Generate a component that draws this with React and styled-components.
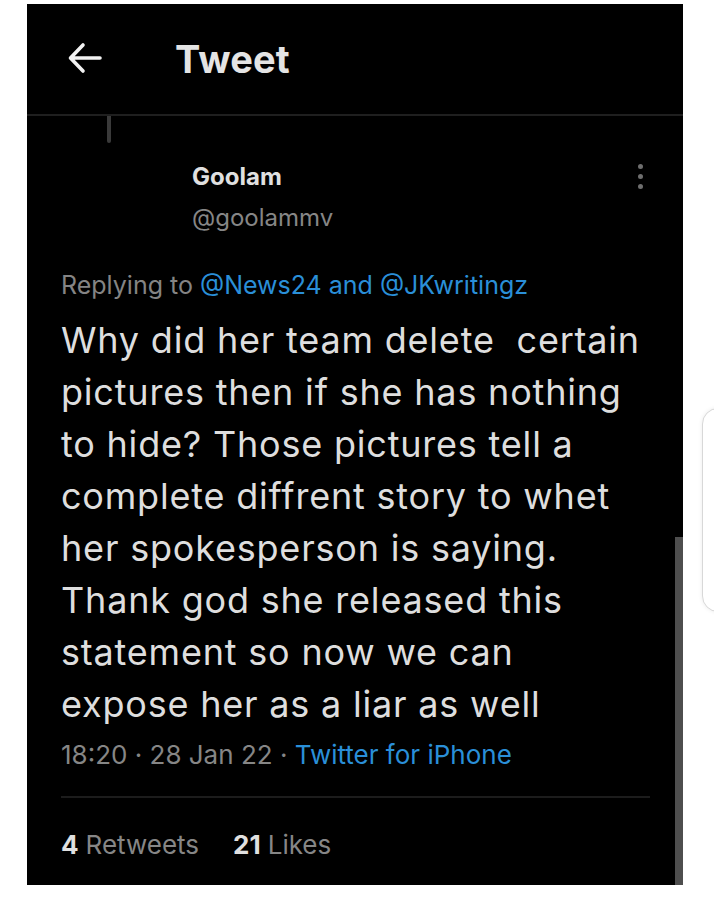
import styled, { createGlobalStyle } from "styled-components";

const Global = createGlobalStyle`
  html, body {
    margin: 0;
    padding: 0;
    background: #ffffff;
  }
  body {
    font-family: Inter, "Noto Sans", sans-serif;
    -webkit-font-smoothing: antialiased;
  }
`;

const Page = styled.div`
  position: relative;
  width: 714px;
  height: 905px;
  overflow: hidden;
  padding: 4px 0 0 27px;
  box-sizing: border-box;
`;

const Screen = styled.div`
  position: relative;
  width: 656px;
  height: 881px;
  background: #000;
  color: #e2e2e2;
  display: flex;
  flex-direction: column;
`;

const Header = styled.div`
  height: 112px;
  display: flex;
  align-items: center;
  border-bottom: 2px solid #1f1f1f;
  padding-left: 40px;
  box-sizing: border-box;
`;

const BackButton = styled.div`
  width: 36px;
  height: 36px;
  display: flex;
  align-items: center;
  justify-content: center;
  margin-right: 72px;
  margin-top: -2px;
`;

const HeaderTitle = styled.h1`
  margin: 0;
  font-size: 38px;
  font-weight: 700;
  letter-spacing: 0.2px;
  color: #e4e4e4;
`;

const Thread = styled.div`
  width: 4px;
  height: 27px;
  margin-left: 80px;
  background: #3a3a3a;
  border-radius: 0 0 2px 2px;
`;

const Author = styled.div`
  display: flex;
  justify-content: space-between;
  padding: 19px 40px 0 165px;
`;

const Names = styled.div`
  display: flex;
  flex-direction: column;
`;

const Name = styled.span`
  font-size: 24px;
  font-weight: 700;
  line-height: 30px;
  color: #e0e0e0;
`;

const Handle = styled.span`
  font-size: 24px;
  line-height: 30px;
  margin-top: 11px;
  color: #868686;
`;

const More = styled.div`
  display: flex;
  flex-direction: column;
  gap: 5px;
  padding-top: 2px;
`;

const Dot = styled.span`
  width: 5px;
  height: 5px;
  border-radius: 50%;
  background: #6e6e6e;
`;

const Content = styled.div`
  padding: 0 34px;
`;

const Replying = styled.div`
  margin-top: 37px;
  font-size: 25px;
  line-height: 30px;
  color: #848484;
`;

const Mention = styled.span`
  color: #2a8fd8;
`;

const Body = styled.p`
  margin: 14px 0 0;
  font-size: 36px;
  line-height: 52px;
  letter-spacing: 0.8px;
  color: #dedede;
  white-space: pre-wrap;
`;

const Meta = styled.div`
  margin-top: 8px;
  font-size: 26px;
  line-height: 34px;
  color: #868686;
`;

const Divider = styled.div`
  height: 2px;
  background: #1c1c1c;
  margin: 24px 0 0;
  width: 589px;
`;

const Stats = styled.div`
  display: flex;
  gap: 34px;
  margin-top: 32px;
  font-size: 26px;
  line-height: 30px;
  color: #868686;
`;

const Count = styled.b`
  color: #e0e0e0;
  font-weight: 700;
  margin-right: 7px;
`;

const Scrollbar = styled.div`
  position: absolute;
  right: 0;
  bottom: 0;
  width: 8px;
  height: 348px;
  background: #4e4e4e;
`;

const EdgeCard = styled.div`
  position: absolute;
  left: 702px;
  top: 408px;
  width: 40px;
  height: 202px;
  border: 1px solid #d8d8d8;
  border-radius: 16px;
  background: #fff;
  box-shadow: 0 0 4px rgba(0, 0, 0, 0.08);
`;

const BackArrow = () => (
  <svg width="36" height="36" viewBox="0 0 36 36" fill="none">
    <path
      d="M33 18H4M16 5L3.5 18L16 31"
      stroke="#f2f2f2"
      strokeWidth="3.6"
      strokeLinecap="round"
      strokeLinejoin="round"
    />
  </svg>
);

const lines = [
  "Why did her team delete  certain",
  "pictures then if she has nothing",
  "to hide? Those pictures tell a",
  "complete diffrent story to whet",
  "her spokesperson is saying.",
  "Thank god she released this",
  "statement so now we can",
  "expose her as a liar as well",
];

export default function App() {
  return (
    <>
      <Global />
      <Page>
        <Screen>
          <Header>
            <BackButton>
              <BackArrow />
            </BackButton>
            <HeaderTitle>Tweet</HeaderTitle>
          </Header>
          <Thread />
          <Author>
            <Names>
              <Name>Goolam</Name>
              <Handle>@goolammv</Handle>
            </Names>
            <More>
              <Dot />
              <Dot />
              <Dot />
            </More>
          </Author>
          <Content>
            <Replying>
              Replying to <Mention>@News24</Mention> <Mention>and</Mention>{" "}
              <Mention>@JKwritingz</Mention>
            </Replying>
            <Body>
              {lines.map((l, i) => (
                <span key={i}>
                  {l}
                  {i < lines.length - 1 && <br />}
                </span>
              ))}
            </Body>
            <Meta>
              18:20 · 28 Jan 22 · <Mention>Twitter for iPhone</Mention>
            </Meta>
            <Divider />
            <Stats>
              <span>
                <Count>4</Count>Retweets
              </span>
              <span>
                <Count>21</Count>Likes
              </span>
            </Stats>
          </Content>
          <Scrollbar />
        </Screen>
        <EdgeCard />
      </Page>
    </>
  );
}
